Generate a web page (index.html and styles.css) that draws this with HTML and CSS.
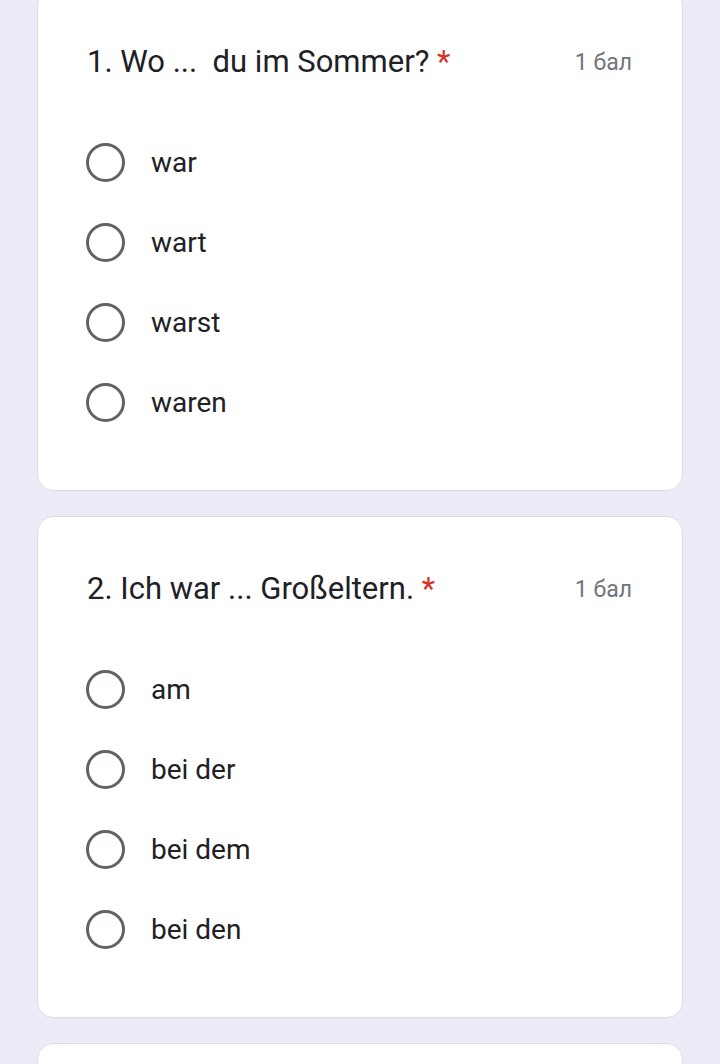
FILE: index.html
```html
<!DOCTYPE html>
<html lang="de">
<head>
<meta charset="utf-8">
<link rel="stylesheet" href="styles.css">
</head>
<body>
<main class="form">
  <section class="card">
    <div class="q-head">
      <div class="q-title">1. Wo ...&nbsp; du im Sommer? <span class="req">*</span></div>
      <div class="q-points">1 бал</div>
    </div>
    <ul class="options">
      <li class="option"><span class="radio"></span><span class="label">war</span></li>
      <li class="option"><span class="radio"></span><span class="label">wart</span></li>
      <li class="option"><span class="radio"></span><span class="label">warst</span></li>
      <li class="option"><span class="radio"></span><span class="label">waren</span></li>
    </ul>
  </section>
  <section class="card">
    <div class="q-head">
      <div class="q-title">2. Ich war ... Großeltern. <span class="req">*</span></div>
      <div class="q-points">1 бал</div>
    </div>
    <ul class="options">
      <li class="option"><span class="radio"></span><span class="label">am</span></li>
      <li class="option"><span class="radio"></span><span class="label">bei der</span></li>
      <li class="option"><span class="radio"></span><span class="label">bei dem</span></li>
      <li class="option"><span class="radio"></span><span class="label">bei den</span></li>
    </ul>
  </section>
  <section class="card"></section>
</main>
</body>
</html>
```
FILE: styles.css
```css
html, body {
  margin: 0;
  padding: 0;
  background: #edebf8;
  overflow: hidden;
}
body {
  font-family: Roboto, "Liberation Sans", sans-serif;
  color: #202124;
}
.form {
  display: flex;
  flex-direction: column;
  gap: 25px;
  padding: 0 37px;
}
.card {
  background: #fff;
  border: 1px solid #dadce0;
  border-radius: 16px;
  padding: 54px 49px 48px;
  min-height: 200px;
}
.card:first-child {
  margin-top: -11px;
}
.q-head {
  display: flex;
  justify-content: space-between;
  align-items: center;
  height: 36px;
}
.q-title {
  font-size: 31px;
  line-height: 36px;
}
.req {
  color: #d93025;
}
.q-points {
  font-size: 23px;
  color: #70757a;
  padding-right: 1px;
}
.options {
  list-style: none;
  margin: 42px 0 0;
  padding: 0;
}
.option {
  display: flex;
  align-items: center;
  height: 80px;
}
.radio {
  box-sizing: border-box;
  width: 39px;
  height: 39px;
  border: 3px solid #5f6368;
  border-radius: 50%;
  margin-left: -1px;
  margin-right: 26px;
  flex: none;
}
.label {
  font-size: 28px;
}
```
